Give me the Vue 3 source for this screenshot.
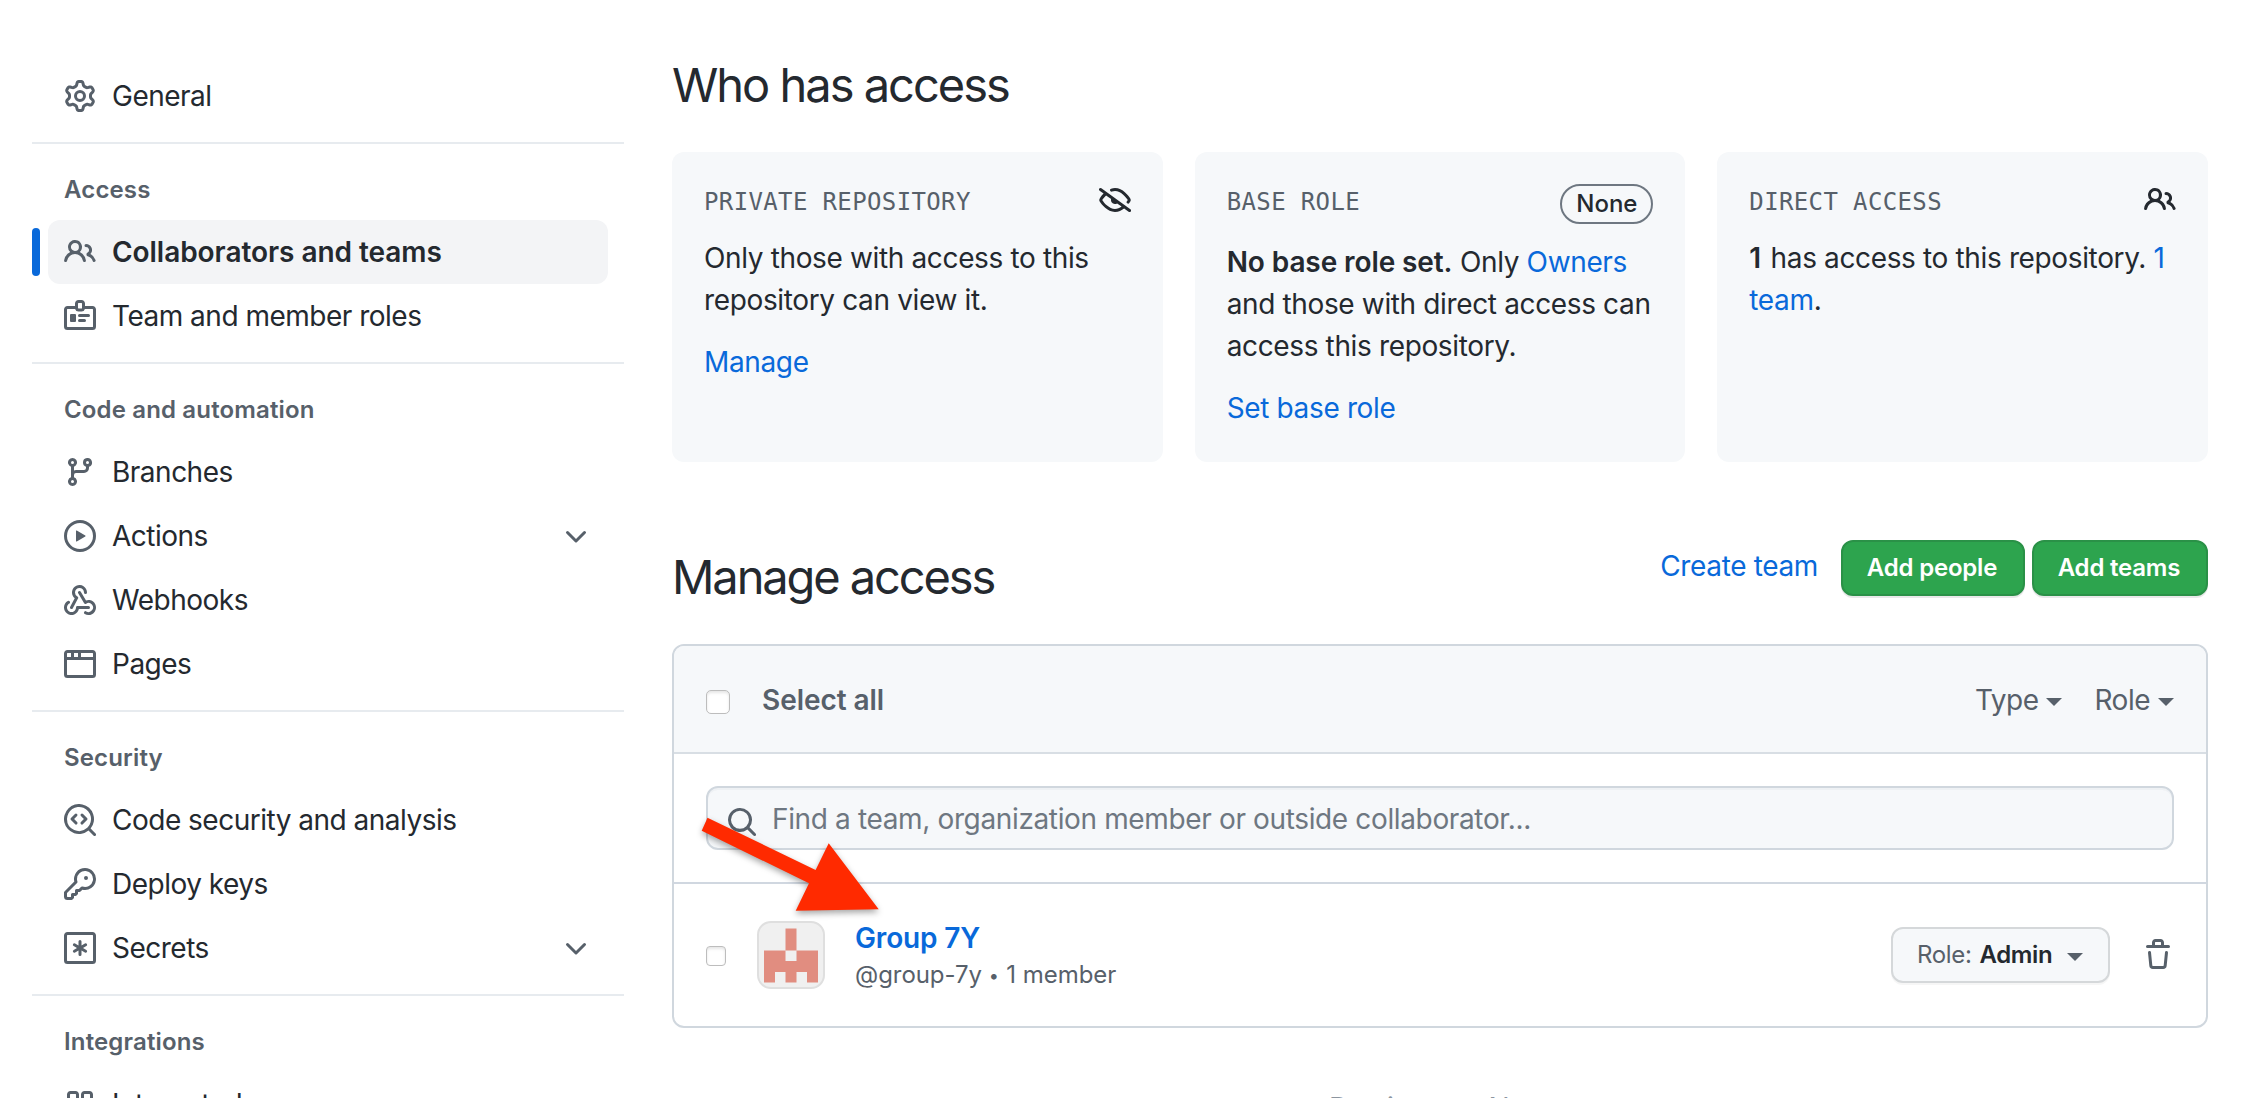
<script setup>
import { h } from 'vue'

const paths = {
  gear: ['M8 0a8.2 8.2 0 0 1 .701.031C9.444.095 9.99.645 10.16 1.29l.288 1.107c.018.066.079.158.212.224.231.114.454.243.668.386.123.082.233.09.299.071l1.103-.303c.644-.176 1.392.021 1.82.63.27.385.506.792.704 1.218.315.675.111 1.422-.364 1.891l-.814.806c-.049.048-.098.147-.088.294.016.257.016.515 0 .772-.01.147.038.246.088.294l.814.806c.475.469.679 1.216.364 1.891a7.977 7.977 0 0 1-.704 1.217c-.428.61-1.176.807-1.82.63l-1.102-.302c-.067-.019-.177-.011-.3.071a5.909 5.909 0 0 1-.668.386c-.133.066-.194.158-.211.224l-.29 1.106c-.168.646-.715 1.196-1.458 1.26a8.006 8.006 0 0 1-1.402 0c-.743-.064-1.289-.614-1.458-1.26l-.289-1.106c-.018-.066-.079-.158-.212-.224a5.738 5.738 0 0 1-.668-.386c-.123-.082-.233-.09-.299-.071l-1.103.303c-.644.176-1.392-.021-1.82-.63a8.12 8.12 0 0 1-.704-1.218c-.315-.675-.111-1.422.363-1.891l.815-.806c.05-.048.098-.147.088-.294a6.214 6.214 0 0 1 0-.772c.01-.147-.038-.246-.088-.294l-.815-.806C.635 6.045.431 5.298.746 4.623a7.92 7.92 0 0 1 .704-1.217c.428-.61 1.176-.807 1.82-.63l1.102.302c.067.019.177.011.3-.071.214-.143.437-.272.668-.386.133-.066.194-.158.211-.224l.29-1.106C6.009.645 6.556.095 7.299.03 7.53.01 7.764 0 8 0Zm-.571 1.525c-.036.003-.108.036-.137.146l-.289 1.105c-.147.561-.549.967-.998 1.189-.173.086-.34.183-.5.29-.417.278-.97.423-1.529.27l-1.103-.303c-.109-.03-.175.016-.195.045-.22.312-.412.644-.573.99-.014.031-.021.11.059.19l.815.806c.411.406.562.957.53 1.456a4.709 4.709 0 0 0 0 .582c.032.499-.119 1.05-.53 1.456l-.815.806c-.081.08-.073.159-.059.19.162.346.353.677.573.989.02.03.085.076.195.046l1.102-.303c.56-.153 1.113-.008 1.53.27.161.107.328.204.501.29.447.222.85.629.997 1.189l.289 1.105c.029.109.101.143.137.146a6.6 6.6 0 0 0 1.142 0c.036-.003.108-.036.137-.146l.289-1.105c.147-.561.549-.967.998-1.189.173-.086.34-.183.5-.29.417-.278.97-.423 1.529-.27l1.103.303c.109.029.175-.016.195-.045.22-.313.411-.644.573-.99.014-.031.021-.11-.059-.19l-.815-.806c-.411-.406-.562-.957-.53-1.456a4.709 4.709 0 0 0 0-.582c-.032-.499.119-1.05.53-1.456l.815-.806c.081-.08.073-.159.059-.19a6.464 6.464 0 0 0-.573-.989c-.02-.03-.085-.076-.195-.046l-1.102.303c-.56.153-1.113.008-1.53-.27a4.44 4.44 0 0 0-.501-.29c-.447-.222-.85-.629-.997-1.189l-.289-1.105c-.029-.11-.101-.143-.137-.146a6.6 6.6 0 0 0-1.142 0ZM11 8a3 3 0 1 1-6 0 3 3 0 0 1 6 0ZM9.5 8a1.5 1.5 0 1 0-3.001.001A1.5 1.5 0 0 0 9.5 8Z'],
  people: ['M2 5.5a3.5 3.5 0 1 1 5.898 2.549 5.508 5.508 0 0 1 3.034 4.084.75.75 0 1 1-1.482.235 4 4 0 0 0-7.9 0 .75.75 0 0 1-1.482-.236A5.507 5.507 0 0 1 3.102 8.05 3.493 3.493 0 0 1 2 5.5ZM11 4a3.001 3.001 0 0 1 2.22 5.018 5.01 5.01 0 0 1 2.56 3.012.749.749 0 0 1-.885.954.752.752 0 0 1-.549-.514 3.507 3.507 0 0 0-2.522-2.372.75.75 0 0 1-.574-.73v-.352a.75.75 0 0 1 .416-.672A1.5 1.5 0 0 0 11 5.5.75.75 0 0 1 11 4Zm-5.5-.5a2 2 0 1 0-.001 3.999A2 2 0 0 0 5.5 3.5Z'],
  badge: ['M1.75 3H5.5V1.75C5.5.784 6.284 0 7.25 0h1.5c.966 0 1.75.784 1.75 1.75V3h3.75c.966 0 1.75.784 1.75 1.75v8.5A1.75 1.75 0 0 1 14.25 15H1.75A1.75 1.75 0 0 1 0 13.25v-8.5C0 3.784.784 3 1.75 3ZM1.75 4.5a.25.25 0 0 0-.25.25v8.5c0 .138.112.25.25.25h12.5a.25.25 0 0 0 .25-.25v-8.5a.25.25 0 0 0-.25-.25H10.45A1.75 1.75 0 0 1 8.75 5.75h-1.5A1.75 1.75 0 0 1 5.55 4.5ZM7.25 1.5a.25.25 0 0 0-.25.25V4c0 .138.112.25.25.25h1.5A.25.25 0 0 0 9 4V1.75a.25.25 0 0 0-.25-.25Z', 'M3.5 7h2a.5.5 0 0 1 .5.5v3a.5.5 0 0 1-.5.5h-2a.5.5 0 0 1-.5-.5v-3a.5.5 0 0 1 .5-.5ZM7.75 7h4.5a.75.75 0 0 1 0 1.5h-4.5a.75.75 0 0 1 0-1.5ZM7.75 9.5h2.5a.75.75 0 0 1 0 1.5h-2.5a.75.75 0 0 1 0-1.5Z'],
  branch: ['M9.5 3.25a2.25 2.25 0 1 1 3 2.122V6A2.5 2.5 0 0 1 10 8.5H6a1 1 0 0 0-1 1v1.128a2.251 2.251 0 1 1-1.5 0V5.372a2.25 2.25 0 1 1 1.5 0v1.836A2.493 2.493 0 0 1 6 7h4a1 1 0 0 0 1-1v-.628A2.25 2.25 0 0 1 9.5 3.25Zm-6 0a.75.75 0 1 0 1.5 0 .75.75 0 0 0-1.5 0Zm8.25-.75a.75.75 0 1 0 0 1.5.75.75 0 0 0 0-1.5ZM4.25 12a.75.75 0 1 0 0 1.5.75.75 0 0 0 0-1.5Z'],
  play: ['M8 0a8 8 0 1 1 0 16A8 8 0 0 1 8 0ZM1.5 8a6.5 6.5 0 1 0 13 0 6.5 6.5 0 0 0-13 0Zm4.879-2.773 4.264 2.559a.25.25 0 0 1 0 .428l-4.264 2.559A.25.25 0 0 1 6 10.559V5.442a.25.25 0 0 1 .379-.215Z'],
  webhook: ['M5.5 4.25a2.25 2.25 0 0 1 4.5 0 .75.75 0 0 0 1.5 0 3.75 3.75 0 1 0-6.14 2.889l-2.272 4.258a.75.75 0 0 0 1.324.706L7 7.25a.75.75 0 0 0-.309-1.015A2.25 2.25 0 0 1 5.5 4.25Z', 'M7.364 3.607a.75.75 0 0 1 1.03.257l2.608 4.349a3.75 3.75 0 1 1-.628 6.785.75.75 0 0 1 .752-1.299 2.25 2.25 0 1 0-.033-3.88.75.75 0 0 1-1.03-.256L7.107 4.636a.75.75 0 0 1 .257-1.03Z', 'M2.9 8.776A.75.75 0 0 1 2.625 9.8 2.25 2.25 0 1 0 6 11.75a.75.75 0 0 1 .75-.751h5.5a.75.75 0 0 1 0 1.5H7.425a3.751 3.751 0 1 1-5.55-3.998.75.75 0 0 1 1.024.274Z'],
  browser: ['M0 2.75C0 1.784.784 1 1.75 1h12.5c.966 0 1.75.784 1.75 1.75v10.5A1.75 1.75 0 0 1 14.25 15H1.75A1.75 1.75 0 0 1 0 13.25ZM14.5 6h-13v7.25c0 .138.112.25.25.25h12.5a.25.25 0 0 0 .25-.25Zm-6-3.5v2h6V2.75a.25.25 0 0 0-.25-.25ZM5 2.5v2h2v-2Zm-3.25 0a.25.25 0 0 0-.25.25V4.5h2v-2Z'],
  codescan: ['M8.47 4.97a.75.75 0 0 0 0 1.06L9.94 7.5 8.47 8.97a.75.75 0 1 0 1.06 1.06l2-2a.75.75 0 0 0 0-1.06l-2-2a.75.75 0 0 0-1.06 0ZM6.53 6.03a.75.75 0 0 0-1.06-1.06l-2 2a.75.75 0 0 0 0 1.06l2 2a.75.75 0 1 0 1.06-1.06L5.06 7.5l1.47-1.47Z', 'M12.246 13.307a7.501 7.501 0 1 1 1.06-1.06l2.474 2.473a.749.749 0 0 1-.326 1.275.749.749 0 0 1-.734-.215ZM1.5 7.5a6.002 6.002 0 0 0 3.608 5.504 6.002 6.002 0 0 0 6.486-1.117.748.748 0 0 1 .292-.293A6 6 0 1 0 1.5 7.5Z'],
  key: ['M10.5 0a5.499 5.499 0 1 1-1.288 10.848l-.932.932a.749.749 0 0 1-.53.22H7v.75a.749.749 0 0 1-.22.53l-.5.5a.749.749 0 0 1-.53.22H5v.75a.749.749 0 0 1-.22.53l-.5.5a.749.749 0 0 1-.53.22h-2A1.75 1.75 0 0 1 0 14.25v-2c0-.199.079-.389.22-.53l4.932-4.932A5.5 5.5 0 0 1 10.5 0Zm-4 5.5c-.001.431.069.86.205 1.269a.75.75 0 0 1-.181.768L1.5 12.56v1.69c0 .138.112.25.25.25h1.69l.06-.06v-1.19a.75.75 0 0 1 .75-.75h1.19l.06-.06v-1.19a.75.75 0 0 1 .75-.75h1.19l1.023-1.025a.75.75 0 0 1 .768-.18A4 4 0 1 0 6.5 5.5ZM11 6a1 1 0 1 1 0-2 1 1 0 0 1 0 2Z'],
  asterisk: ['M1.75 0h12.5C15.216 0 16 .784 16 1.75v12.5A1.75 1.75 0 0 1 14.25 16H1.75A1.75 1.75 0 0 1 0 14.25V1.75C0 .784.784 0 1.75 0ZM1.5 1.75v12.5c0 .138.112.25.25.25h12.5a.25.25 0 0 0 .25-.25V1.75a.25.25 0 0 0-.25-.25H1.75a.25.25 0 0 0-.25.25Z', 'M8 4a.75.75 0 0 1 .75.75V6.7l1.69-.975a.75.75 0 0 1 .75 1.299L9.5 8l1.69.976a.75.75 0 0 1-.75 1.299L8.75 9.3v1.95a.75.75 0 0 1-1.5 0V9.3l-1.69.975a.75.75 0 0 1-.75-1.299L6.5 8l-1.69-.976a.75.75 0 0 1 .75-1.299l1.69.975V4.75A.75.75 0 0 1 8 4Z'],
  apps: ['M3.25 1.5h2.5c.966 0 1.75.784 1.75 1.75v2.5A1.75 1.75 0 0 1 5.75 7.5h-2.5A1.75 1.75 0 0 1 1.5 5.75v-2.5c0-.966.784-1.75 1.75-1.75ZM3 3.25v2.5c0 .138.112.25.25.25h2.5a.25.25 0 0 0 .25-.25v-2.5a.25.25 0 0 0-.25-.25h-2.5a.25.25 0 0 0-.25.25Z', 'M10.25 1.5h2.5c.966 0 1.75.784 1.75 1.75v2.5a1.75 1.75 0 0 1-1.75 1.75h-2.5A1.75 1.75 0 0 1 8.5 5.75v-2.5c0-.966.784-1.75 1.75-1.75ZM10 3.25v2.5c0 .138.112.25.25.25h2.5a.25.25 0 0 0 .25-.25v-2.5a.25.25 0 0 0-.25-.25h-2.5a.25.25 0 0 0-.25.25Z'],
  chevron: ['M12.78 5.22a.749.749 0 0 1 0 1.06l-4.25 4.25a.749.749 0 0 1-1.06 0L3.22 6.28a.749.749 0 1 1 1.06-1.06L8 8.939l3.72-3.719a.749.749 0 0 1 1.06 0Z'],
  eyeClosed: ['M.143 2.31a.75.75 0 0 1 1.047-.167l14.5 10.5a.75.75 0 1 1-.88 1.214l-2.248-1.628C11.346 13.19 9.792 14 8 14c-1.981 0-3.67-.992-4.933-2.078C1.797 10.832.88 9.577.43 8.9a1.619 1.619 0 0 1 0-1.797c.353-.533.995-1.42 1.868-2.305L.31 3.357A.75.75 0 0 1 .143 2.31Zm1.536 5.622A.12.12 0 0 0 1.657 8c0 .021.006.045.022.068.412.621 1.242 1.75 2.366 2.717C5.175 11.758 6.527 12.5 8 12.5c1.195 0 2.31-.488 3.29-1.191L9.063 9.695A2 2 0 0 1 6.058 7.52L3.529 5.688a14.207 14.207 0 0 0-1.85 2.244ZM8 3.5c-.516 0-1.017.09-1.499.251a.75.75 0 1 1-.473-1.423A6.207 6.207 0 0 1 8 2c1.981 0 3.67.992 4.933 2.078 1.27 1.091 2.187 2.345 2.637 3.023a1.62 1.62 0 0 1 0 1.798c-.11.166-.248.365-.41.587a.75.75 0 1 1-1.21-.887c.148-.201.272-.382.371-.53a.119.119 0 0 0 0-.137c-.412-.621-1.242-1.75-2.366-2.717C10.825 4.242 9.473 3.5 8 3.5Z'],
  search: ['M10.68 11.74a6 6 0 0 1-7.922-8.982 6 6 0 0 1 8.982 7.922l3.04 3.04a.749.749 0 0 1-.326 1.275.749.749 0 0 1-.734-.215ZM11.5 7a4.499 4.499 0 1 0-8.997 0A4.499 4.499 0 0 0 11.5 7Z'],
  trash: ['M11 1.75V3h2.25a.75.75 0 0 1 0 1.5H2.75a.75.75 0 0 1 0-1.5H5V1.75C5 .784 5.784 0 6.75 0h2.5C10.216 0 11 .784 11 1.75ZM4.496 6.675l.66 6.6a.25.25 0 0 0 .249.225h5.19a.25.25 0 0 0 .249-.225l.66-6.6a.75.75 0 0 1 1.492.149l-.66 6.6A1.748 1.748 0 0 1 10.595 15h-5.19a1.75 1.75 0 0 1-1.741-1.575l-.66-6.6a.75.75 0 1 1 1.492-.15ZM6.5 1.75V3h3V1.75a.25.25 0 0 0-.25-.25h-2.5a.25.25 0 0 0-.25.25Z'],
}

const Icon = (props) =>
  h('svg', { viewBox: '0 0 16 16', width: 32, height: 32, fill: 'currentColor', 'fill-rule': 'evenodd' },
    paths[props.name].map((d) => h('path', { d })))
Icon.props = ['name']

const sections = [
  { items: [{ icon: 'gear', label: 'General' }] },
  { title: 'Access', items: [
    { icon: 'people', label: 'Collaborators and teams', active: true },
    { icon: 'badge', label: 'Team and member roles' },
  ] },
  { title: 'Code and automation', items: [
    { icon: 'branch', label: 'Branches' },
    { icon: 'play', label: 'Actions', expandable: true },
    { icon: 'webhook', label: 'Webhooks' },
    { icon: 'browser', label: 'Pages' },
  ] },
  { title: 'Security', items: [
    { icon: 'codescan', label: 'Code security and analysis' },
    { icon: 'key', label: 'Deploy keys' },
    { icon: 'asterisk', label: 'Secrets', expandable: true },
  ] },
  { title: 'Integrations', items: [{ icon: 'apps', label: 'Integrated' }] },
]
</script>

<template>
  <div class="page">
    <nav class="sidebar">
      <section v-for="(s, i) in sections" :key="i" class="group">
        <h3 v-if="s.title">{{ s.title }}</h3>
        <a v-for="item in s.items" :key="item.label" class="item" :class="{ active: item.active }">
          <Icon :name="item.icon" />
          <span class="label">{{ item.label }}</span>
          <Icon v-if="item.expandable" name="chevron" class="chev" />
        </a>
      </section>
    </nav>

    <main class="main">
      <h2 class="who">Who has access</h2>
      <div class="cards">
        <div class="card">
          <header><span class="mono">Private repository</span><Icon name="eyeClosed" /></header>
          <p>Only those with access to this<br>repository can view it.</p>
          <a class="link">Manage</a>
        </div>
        <div class="card">
          <header><span class="mono">Base role</span><span class="pill">None</span></header>
          <p><b>No base role set.</b> Only <a class="link">Owners</a><br>and those with direct access can<br>access this repository.</p>
          <a class="link">Set base role</a>
        </div>
        <div class="card">
          <header><span class="mono">Direct access</span><Icon name="people" /></header>
          <p><b class="count">1</b> has access to this repository. <a class="link">1<br>team</a>.</p>
        </div>
      </div>

      <div class="manage">
        <h2>Manage access</h2>
        <div class="actions">
          <a class="link">Create team</a>
          <button class="btn people-btn">Add people</button>
          <button class="btn teams-btn">Add teams</button>
        </div>
      </div>

      <div class="box">
        <div class="box-head">
          <span class="check"></span>
          <span class="select-all">Select all</span>
          <span class="filter type"><span>Type</span><i class="caret"></i></span>
          <span class="filter role"><span>Role</span><i class="caret"></i></span>
        </div>
        <div class="search-row">
          <div class="search">
            <Icon name="search" />
            <span>Find a team, organization member or outside collaborator...</span>
          </div>
        </div>
        <div class="row">
          <span class="check small"></span>
          <svg class="avatar" viewBox="0 0 64 64" width="64" height="64">
            <path fill="#e18d80" d="M26.500 5.500h11v22h-11zM5 27.500h21.500v10.500h11V27.500H59V59.500H48v-10.500H37.500v10.500h-11v-10.500H16v10.500H5z" />
          </svg>
          <div class="who-text">
            <a class="name">Group 7Y</a>
            <span class="meta">@group-7y <span class="dot">•</span> 1 member</span>
          </div>
          <button class="role-btn">Role:<b>Admin</b><i class="caret"></i></button>
          <Icon name="trash" class="trash" />
        </div>
        <svg class="arrow" width="220" height="130" viewBox="690 800 220 130">
          <path d="M707.500 817.700 815.600 870 828.700 843.300 878.700 909.300 795.700 910.700 809 883.300 701.700 830.700Z" fill="#ff2a00" />
        </svg>
      </div>

      <div class="pager"><span>Previous</span><span>Next</span></div>
    </main>
  </div>
</template>

<style>
body { background: #fff; overflow: hidden; }
</style>

<style scoped>
.page {
  display: flex;
  gap: 48px;
  width: 2250px;
  height: 1098px;
  padding-left: 32px;
  box-sizing: border-box;
  overflow: hidden;
  font-family: Inter, "Liberation Sans", sans-serif;
  font-size: 28px;
  line-height: 42px;
  letter-spacing: -0.36px;
  color: #24292f;
}
h2, h3, p { margin: 0; }
svg { display: block; flex: none; }
.link { color: #0969da; }

.sidebar { width: 592px; flex: none; padding-top: 64px; }
.group { padding-bottom: 14px; }
.group + .group { border-top: 2px solid #e7ebef; padding-top: 14px; }
.group h3 {
  height: 62px;
  padding: 0 32px;
  line-height: 64px;
  font-size: 24px;
  font-weight: 600;
  letter-spacing: 0.15px;
  color: #57606a;
}
.item {
  position: relative;
  display: flex;
  align-items: center;
  gap: 16px;
  height: 64px;
  margin: 0 16px;
  padding: 0 16px;
  box-sizing: border-box;
  border-radius: 12px;
}
.item svg { color: #57606a; }
.item .chev { margin-top: 2px; }
.label { flex: 1; letter-spacing: -0.5px; }
.active { background: #f3f4f6; font-weight: 600; }
.active .label { letter-spacing: -0.05px; }
.active::before {
  content: "";
  position: absolute;
  left: -16px;
  top: 8px;
  width: 8px;
  height: 48px;
  border-radius: 6px;
  background: #0969da;
}

.main { width: 1536px; flex: none; }
h2 { font-size: 47px; font-weight: 400; line-height: 72px; letter-spacing: -2px; }
.who { padding-top: 49px; }
.cards { display: flex; gap: 32px; margin-top: 31px; }
.card {
  flex: 1;
  height: 310px;
  box-sizing: border-box;
  padding: 32px;
  border-radius: 12px;
  background: #f6f8fa;
  white-space: nowrap;
}
.card header { display: flex; justify-content: space-between; align-items: flex-start; margin-bottom: 17px; min-height: 36px; }
.card p { margin-bottom: 20px; }
.card b { font-weight: 600; letter-spacing: -0.1px; }
.card .count { margin-right: 2px; }
.mono {
  font-family: "DejaVu Sans Mono", "Liberation Mono", monospace;
  font-size: 24px;
  line-height: 36px;
  letter-spacing: 0.37px;
  text-transform: uppercase;
  color: #57606a;
}
.pill {
  width: 93px;
  height: 40px;
  box-sizing: border-box;
  border: 2px solid #6e7781;
  border-radius: 20px;
  text-align: center;
  font-size: 24px;
  font-weight: 500;
  line-height: 36px;
  letter-spacing: 0;
}

.manage { display: flex; justify-content: space-between; height: 182px; }
.manage h2 { padding-top: 79px; letter-spacing: -2.1px; }
.actions { display: flex; align-items: center; height: 56px; padding-top: 78px; }
.actions .link { margin: -4px 23px 0 0; }
.btn {
  height: 56px;
  padding: 0 2px 2px 0;
  border: 2px solid #2a9147;
  border-radius: 12px;
  background: #2da44e;
  box-shadow: 0 2px 0 rgba(27, 31, 36, 0.1);
  color: #fff;
  font: 600 24px Inter, sans-serif;
  letter-spacing: -0.2px;
}
.people-btn { width: 184px; margin-right: 7px; }
.teams-btn { width: 176px; }

.box {
  position: relative;
  height: 384px;
  box-sizing: border-box;
  border: 2px solid #d0d7de;
  border-radius: 12px;
}
.box-head {
  display: flex;
  align-items: center;
  height: 106px;
  padding: 0 32px;
  border-bottom: 2px solid #d8dee4;
  border-radius: 10px 10px 0 0;
  background: #f6f8fa;
  color: #57606a;
}
.check {
  width: 24px;
  height: 24px;
  margin-top: 6px;
  box-sizing: border-box;
  border: 1px solid #bdbdbd;
  border-radius: 5px;
  background: #fff;
  box-shadow: inset 0 2px 3px rgba(0, 0, 0, 0.1);
}
.check.small { width: 20px; height: 20px; margin-top: 2px; border-radius: 4px; }
.select-all { margin-left: 32px; padding-top: 2px; font-weight: 600; letter-spacing: -0.05px; flex: 1; }
.filter { display: flex; align-items: center; }
.filter span { padding-top: 2px; letter-spacing: -0.5px; }
.role { margin-left: 32px; }
.caret {
  margin: 6px 0 0 8px;
  border: 8px solid transparent;
  border-top-color: currentColor;
  border-bottom: 0;
}
.search-row { height: 128px; padding: 32px 32px 0; box-sizing: border-box; }
.search {
  display: flex;
  gap: 14px;
  height: 64px;
  padding-left: 18px;
  box-sizing: border-box;
  border: 2px solid #d0d7de;
  border-radius: 12px;
  background: #f6f8fa;
  box-shadow: inset 0 2px 0 rgba(208, 215, 222, 0.2);
  line-height: 62px;
  color: #6e7781;
}
.search svg { margin-top: 18px; color: #57606a; }
.row {
  display: flex;
  align-items: center;
  height: 144px;
  padding: 0 32px;
  box-sizing: border-box;
  border-top: 2px solid #d0d7e0;
}
.avatar {
  margin-left: 31px;
  border: 2px solid #dfdfdf;
  border-radius: 14px;
  background: #f0f0f0;
}
.who-text { display: flex; flex-direction: column; flex: 1; margin-left: 30px; padding-top: 2px; }
.name { font-weight: 600; line-height: 38px; letter-spacing: -0.15px; color: #0969da; }
.meta { font-size: 24px; line-height: 36px; letter-spacing: -0.05px; color: #57606a; }
.dot { display: inline-block; width: 8px; margin-right: 3px; font-size: 18px; line-height: 1; vertical-align: 1px; text-align: center; }
.role-btn {
  display: flex;
  align-items: center;
  width: 219px;
  height: 56px;
  padding: 0 0 2px 24px;
  border: 2px solid #d5d8da;
  border-radius: 12px;
  background: #f6f8fa;
  box-shadow: 0 2px 0 rgba(27, 31, 36, 0.04);
  color: #57606a;
  font: 400 24px Inter, sans-serif;
  letter-spacing: -0.35px;
}
.role-btn b { margin-left: 8px; font-weight: 600; color: #24292f; }
.role-btn .caret { margin: 6px 0 0 15px; }
.trash { margin-left: 32px; color: #57606a; }
.arrow {
  position: absolute;
  left: 16px;
  top: 154px;
  filter: drop-shadow(0 3px 3px rgba(0, 0, 0, 0.35));
}
.pager {
  display: flex;
  gap: 48px;
  padding: 59px 0 0 657px;
  color: #8c959f;
}
</style>
